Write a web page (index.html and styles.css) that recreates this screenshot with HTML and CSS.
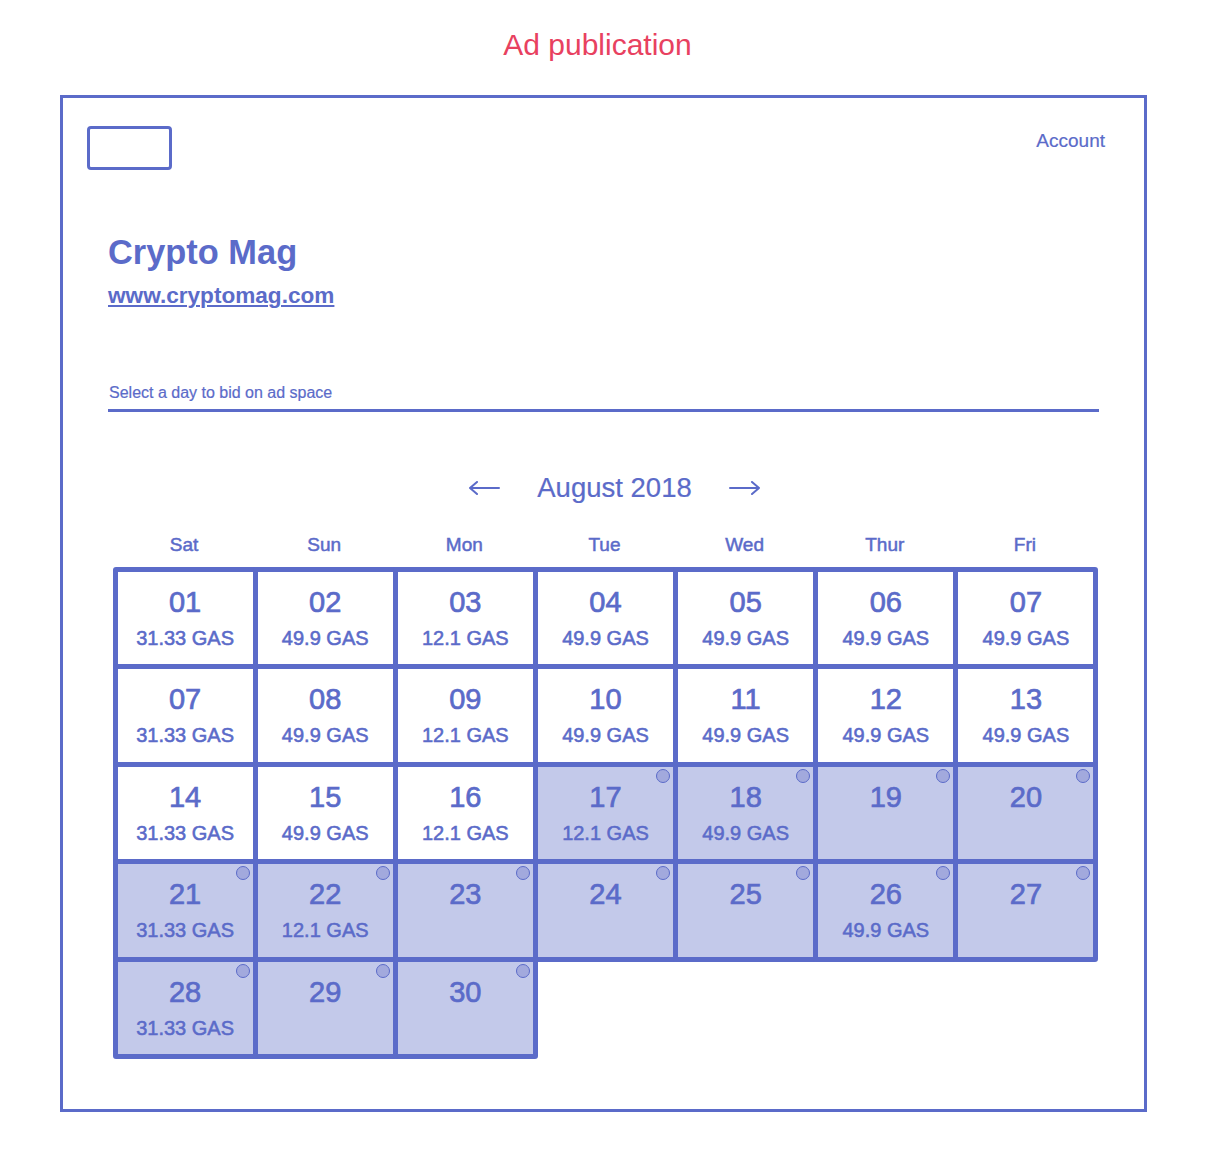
FILE: index.html
```html
<!DOCTYPE html>
<html lang="en">
<head>
    <meta charset="UTF-8">
    <title>Ad publication</title>
    <link rel="stylesheet" href="styles.css">
</head>
<body>
    <h1 class="page-title">Ad publication</h1>

    <div class="frame">
        <div class="top-bar">
            <div class="logo"></div>
            <a href="#" class="account">Account</a>
        </div>

        <div class="content">
            <h2 class="mag-name">Crypto Mag</h2>
            <a href="#" class="mag-url">www.cryptomag.com</a>

            <div class="bid-label">Select a day to bid on ad space</div>

            <div class="month-nav">
                <svg class="arrow" width="32" height="14" viewBox="0 0 32 14"><path d="M31 7H2M9 1L2 7l7 6" fill="none" stroke="#5b6bc9" stroke-width="2" stroke-linecap="round" stroke-linejoin="round"/></svg>
                <span class="month">August 2018</span>
                <svg class="arrow" width="32" height="14" viewBox="0 0 32 14"><path d="M1 7h29M23 1l7 6-7 6" fill="none" stroke="#5b6bc9" stroke-width="2" stroke-linecap="round" stroke-linejoin="round"/></svg>
            </div>

            <div class="weekdays">
                <div>Sat</div><div>Sun</div><div>Mon</div><div>Tue</div><div>Wed</div><div>Thur</div><div>Fri</div>
            </div>

            <div class="calendar">
                <div class="day"><span class="num">01</span><span class="price">31.33 GAS</span></div>
                <div class="day"><span class="num">02</span><span class="price">49.9 GAS</span></div>
                <div class="day"><span class="num">03</span><span class="price">12.1 GAS</span></div>
                <div class="day"><span class="num">04</span><span class="price">49.9 GAS</span></div>
                <div class="day"><span class="num">05</span><span class="price">49.9 GAS</span></div>
                <div class="day"><span class="num">06</span><span class="price">49.9 GAS</span></div>
                <div class="day"><span class="num">07</span><span class="price">49.9 GAS</span></div>

                <div class="day"><span class="num">07</span><span class="price">31.33 GAS</span></div>
                <div class="day"><span class="num">08</span><span class="price">49.9 GAS</span></div>
                <div class="day"><span class="num">09</span><span class="price">12.1 GAS</span></div>
                <div class="day"><span class="num">10</span><span class="price">49.9 GAS</span></div>
                <div class="day"><span class="num">11</span><span class="price">49.9 GAS</span></div>
                <div class="day"><span class="num">12</span><span class="price">49.9 GAS</span></div>
                <div class="day"><span class="num">13</span><span class="price">49.9 GAS</span></div>

                <div class="day"><span class="num">14</span><span class="price">31.33 GAS</span></div>
                <div class="day"><span class="num">15</span><span class="price">49.9 GAS</span></div>
                <div class="day"><span class="num">16</span><span class="price">12.1 GAS</span></div>
                <div class="day open"><span class="num">17</span><span class="price">12.1 GAS</span></div>
                <div class="day open"><span class="num">18</span><span class="price">49.9 GAS</span></div>
                <div class="day open"><span class="num">19</span></div>
                <div class="day open"><span class="num">20</span></div>

                <div class="day open"><span class="num">21</span><span class="price">31.33 GAS</span></div>
                <div class="day open"><span class="num">22</span><span class="price">12.1 GAS</span></div>
                <div class="day open"><span class="num">23</span></div>
                <div class="day open"><span class="num">24</span></div>
                <div class="day open"><span class="num">25</span></div>
                <div class="day open"><span class="num">26</span><span class="price">49.9 GAS</span></div>
                <div class="day open"><span class="num">27</span></div>

                <div class="day open"><span class="num">28</span><span class="price">31.33 GAS</span></div>
                <div class="day open"><span class="num">29</span></div>
                <div class="day open"><span class="num">30</span></div>
            </div>
        </div>
    </div>
</body>
</html>
```

FILE: styles.css
```css
body {
    margin: 0;
    background: #fff;
    font-family: "Liberation Sans", Arial, sans-serif;
    color: #5b6bc9;
}
.page-title {
    width: 1087px;
    margin: 27px 0 0 60px;
    padding-right: 12px;
    box-sizing: border-box;
    text-align: center;
    font-size: 30px;
    line-height: 36px;
    font-weight: normal;
    color: #e8415f;
}
.frame {
    width: 1087px;
    height: 1017px;
    margin: 32px 0 0 60px;
    box-sizing: border-box;
    border: 3px solid #5b6bc9;
}
.top-bar {
    display: flex;
    justify-content: space-between;
    align-items: flex-start;
    padding: 28px 39px 0 24px;
}
.logo {
    width: 85px;
    height: 44px;
    box-sizing: border-box;
    border: 3.5px solid #5b6bc9;
    border-radius: 4px;
}
.account {
    margin-top: 4px;
    font-size: 19px;
    line-height: 22px;
    color: #5b6bc9;
    text-decoration: none;
    -webkit-text-stroke: 0.2px #5b6bc9;
}
.content {
    padding: 0 45px;
}
.mag-name {
    margin: 62px 0 0;
    font-size: 34.4px;
    line-height: 40px;
    font-weight: bold;
}
.mag-url {
    display: inline-block;
    margin-top: 11px;
    font-size: 22.6px;
    line-height: 26px;
    font-weight: bold;
    color: #5b6bc9;
    text-decoration: underline;
    text-decoration-thickness: 1.5px;
    text-underline-offset: 2px;
}
.bid-label {
    margin-top: 74px;
    padding: 0 0 6px 1px;
    font-size: 16px;
    line-height: 20px;
    border-bottom: 3.5px solid #5b6bc9;
    -webkit-text-stroke: 0.2px #5b6bc9;
}
.month-nav {
    display: flex;
    justify-content: center;
    align-items: center;
    gap: 37px;
    margin-top: 60px;
    padding-left: 22px;
    font-size: 27.5px;
    line-height: 32px;
    -webkit-text-stroke: 0.2px #5b6bc9;
}
.arrow {
    display: block;
}
.weekdays {
    display: grid;
    grid-template-columns: repeat(7, 1fr);
    width: 981px;
    margin: 30px 0 0 6px;
    font-size: 19px;
    line-height: 22px;
    text-align: center;
    -webkit-text-stroke: 0.5px #5b6bc9;
}
.calendar {
    display: grid;
    grid-template-columns: repeat(7, 1fr);
    grid-auto-rows: 97.6px;
    width: 981px;
    margin: 13px 0 0 7px;
}
.day {
    position: relative;
    margin: -2.5px;
    border: 5px solid #5b6bc9;
    border-radius: 3px;
    background: #fff;
    display: flex;
    flex-direction: column;
    align-items: center;
    gap: 7px;
    padding-top: 13px;
}
.day.open {
    background: #c3c9ea;
}
.day.open::after {
    content: "";
    position: absolute;
    top: 2px;
    right: 3px;
    width: 12px;
    height: 12px;
    border: 1.5px solid #5b6bc9;
    border-radius: 50%;
    background: #a2a9dd;
}
.num {
    font-size: 29px;
    line-height: 34px;
    -webkit-text-stroke: 0.7px #5b6bc9;
}
.price {
    font-size: 20px;
    line-height: 24px;
    -webkit-text-stroke: 0.55px #5b6bc9;
}
```
